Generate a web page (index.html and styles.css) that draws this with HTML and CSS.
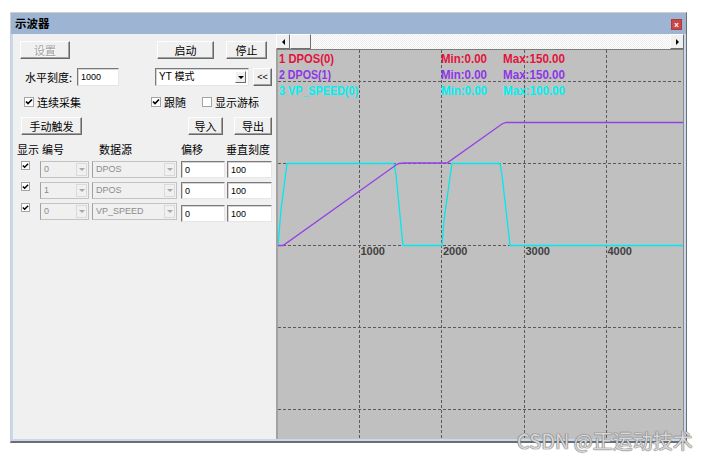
FILE: index.html
```html
<!DOCTYPE html>
<html lang="zh">
<head>
<meta charset="utf-8">
<title>示波器</title>
<link rel="stylesheet" href="styles.css">
</head>
<body>
<div class="window">
  <div class="titlebar">
    <span class="title">示波器</span>
    <span class="close">x</span>
  </div>
  <div class="body">
    <div class="left">
      <div class="row r1">
        <button class="btn b-set" disabled>设置</button>
        <button class="btn b-start">启动</button>
        <button class="btn b-stop">停止</button>
      </div>
      <div class="row r2">
        <span class="lbl-scale">水平刻度:</span>
        <span class="field f-scale">1000</span>
        <span class="field select"><span class="sel-text">YT 模式</span><span class="drop"><i class="tri-down"></i></span></span>
        <button class="btn b-back">&lt;&lt;</button>
      </div>
      <div class="row r3">
        <span class="chk c1"><span class="cb on"><svg width="8" height="8" viewBox="0 0 8 8"><path d="M1 3.5 L3 5.5 L7 1.5" fill="none" stroke="#000" stroke-width="1.7"/></svg></span><span>连续采集</span></span>
        <span class="chk c2"><span class="cb on"><svg width="8" height="8" viewBox="0 0 8 8"><path d="M1 3.5 L3 5.5 L7 1.5" fill="none" stroke="#000" stroke-width="1.7"/></svg></span><span>跟随</span></span>
        <span class="chk c3"><span class="cb"></span><span>显示游标</span></span>
      </div>
      <div class="row r4">
        <button class="btn b-trig">手动触发</button>
        <button class="btn b-imp">导入</button>
        <button class="btn b-exp">导出</button>
      </div>
      <div class="row head">
        <span class="h-show">显示</span>
        <span class="h-num">编号</span>
        <span class="h-src">数据源</span>
        <span class="h-off">偏移</span>
        <span class="h-vs">垂直刻度</span>
      </div>
      <div class="row data">
        <span class="dcb"><span class="cb on"><svg width="8" height="8" viewBox="0 0 8 8"><path d="M1 3.5 L3 5.5 L7 1.5" fill="none" stroke="#000" stroke-width="1.7"/></svg></span></span>
        <span class="combo c-num"><span class="combo-text">0</span><span class="cdrop"><i class="tri-down g"></i></span></span>
        <span class="combo c-src"><span class="combo-text">DPOS</span><span class="cdrop"><i class="tri-down g"></i></span></span>
        <span class="field f-off">0</span>
        <span class="field f-vs">100</span>
      </div>
      <div class="row data">
        <span class="dcb"><span class="cb on"><svg width="8" height="8" viewBox="0 0 8 8"><path d="M1 3.5 L3 5.5 L7 1.5" fill="none" stroke="#000" stroke-width="1.7"/></svg></span></span>
        <span class="combo c-num"><span class="combo-text">1</span><span class="cdrop"><i class="tri-down g"></i></span></span>
        <span class="combo c-src"><span class="combo-text">DPOS</span><span class="cdrop"><i class="tri-down g"></i></span></span>
        <span class="field f-off">0</span>
        <span class="field f-vs">100</span>
      </div>
      <div class="row data last">
        <span class="dcb"><span class="cb on"><svg width="8" height="8" viewBox="0 0 8 8"><path d="M1 3.5 L3 5.5 L7 1.5" fill="none" stroke="#000" stroke-width="1.7"/></svg></span></span>
        <span class="combo c-num"><span class="combo-text">0</span><span class="cdrop"><i class="tri-down g"></i></span></span>
        <span class="combo c-src"><span class="combo-text">VP_SPEED</span><span class="cdrop"><i class="tri-down g"></i></span></span>
        <span class="field f-off low">0</span>
        <span class="field f-vs low">100</span>
      </div>
    </div>
    <div class="right">
      <div class="hscroll">
        <span class="sb-btn"><i class="tri-left"></i></span>
        <span class="sb-thumb"></span>
        <span class="sb-track"></span>
        <span class="sb-btn"><i class="tri-right"></i></span>
      </div>
      <div class="plot">
        <svg class="scope" width="405" height="389" viewBox="0 0 405 389">
          <rect width="405" height="389" fill="#c0c0c0"/>
          <g stroke="#5a5a5a" stroke-width="1" stroke-dasharray="3 2" shape-rendering="crispEdges">
            <line x1="81.5" y1="0" x2="81.5" y2="389"/>
            <line x1="163.5" y1="0" x2="163.5" y2="389"/>
            <line x1="246.5" y1="0" x2="246.5" y2="389"/>
            <line x1="328.5" y1="0" x2="328.5" y2="389"/>
            <line x1="0" y1="31.5" x2="405" y2="31.5"/>
            <line x1="0" y1="113.5" x2="405" y2="113.5"/>
            <line x1="0" y1="195.5" x2="405" y2="195.5"/>
            <line x1="0" y1="277.5" x2="405" y2="277.5"/>
            <line x1="0" y1="359.5" x2="405" y2="359.5"/>
          </g>
          <polyline fill="none" stroke="#00e8f0" stroke-width="1.3" points="0,195.5 3,160 9,113.5 116,113.5 118,125 125,195.5 164,195.5 166,170 174,113.5 222,113.5 224,125 232,195.5 405,195.5"/>
          <polyline fill="none" stroke="#9340e6" stroke-width="1.3" points="0,195.5 5,195.5 118,115 121,113.5 127,113 169,113 224,74 228,72.5 232,72.5 405,72.5"/>
          <g font-family="Liberation Sans, Arial, sans-serif" font-weight="bold" font-size="13">
            <text x="1" y="13" fill="#e0143c" textLength="55" lengthAdjust="spacingAndGlyphs">1 DPOS(0)</text>
            <text x="163" y="13" fill="#e0143c" textLength="46" lengthAdjust="spacingAndGlyphs">Min:0.00</text>
            <text x="225" y="13" fill="#e0143c" textLength="62" lengthAdjust="spacingAndGlyphs">Max:150.00</text>
            <text x="1" y="29" fill="#8e36e4" textLength="52" lengthAdjust="spacingAndGlyphs">2 DPOS(1)</text>
            <text x="163" y="29" fill="#8e36e4" textLength="46" lengthAdjust="spacingAndGlyphs">Min:0.00</text>
            <text x="225" y="29" fill="#8e36e4" textLength="62" lengthAdjust="spacingAndGlyphs">Max:150.00</text>
            <text x="1" y="45" fill="#00f0f0" textLength="79" lengthAdjust="spacingAndGlyphs">3 VP_SPEED(0)</text>
            <text x="163" y="45" fill="#00f0f0" textLength="46" lengthAdjust="spacingAndGlyphs">Min:0.00</text>
            <text x="225" y="45" fill="#00f0f0" textLength="62" lengthAdjust="spacingAndGlyphs">Max:100.00</text>
          </g>
          <g font-family="Liberation Sans, Arial, sans-serif" font-weight="bold" font-size="11" fill="#404040">
            <text x="82.5" y="205">1000</text>
            <text x="165" y="205">2000</text>
            <text x="247.5" y="205">3000</text>
            <text x="329.5" y="205">4000</text>
          </g>
        </svg>
      </div>
    </div>
  </div>
</div>
<div class="watermark">CSDN @正运动技术</div>
</body>
</html>
```

FILE: styles.css
```css
* { box-sizing: border-box; }

body {
  margin: 0;
  background: #fff;
  font-family: "Noto Sans CJK SC", "Liberation Sans", sans-serif;
  font-size: 11px;
  color: #000;
}

.window {
  margin: 12px 0 0 10px;
  width: 677px;
  height: 431px;
  border: 1px solid #cfcfcf;
  border-right-color: #6e6e6e;
  border-bottom: 2px solid #6e6e6e;
  display: flex;
  flex-direction: column;
  background: #f0f0f0;
}

.titlebar {
  height: 21px;
  flex: none;
  background: #9db5d2;
  display: flex;
  align-items: center;
  justify-content: space-between;
  padding: 0 4px 0 4px;
}

.title {
  font-weight: bold;
  font-size: 11.5px;
  line-height: 1;
  margin-top: 1px;
}

.close {
  width: 11px;
  height: 11px;
  background: #c94848;
  color: #fff;
  font: bold 8px/10px "Liberation Sans", sans-serif;
  text-align: center;
  border: 1px solid #b03a3a;
  margin-top: 1px;
}

.body {
  flex: 1;
  min-height: 0;
  display: flex;
  border: 2px solid #c6d9f1;
  border-top: 0;
}

.left {
  width: 263px;
  flex: none;
  display: flex;
  flex-direction: column;
  background: #f0f0f0;
}

.right {
  flex: 1;
  display: flex;
  flex-direction: column;
  min-width: 0;
}

.row {
  display: flex;
  align-items: center;
  flex: none;
}

/* buttons */
.btn {
  height: 18px;
  padding: 0;
  margin: 0;
  font-family: "Noto Sans CJK SC", sans-serif;
  font-size: 11px;
  line-height: 1;
  color: #000;
  background: #f0f0f0;
  border: 1px solid;
  border-color: #fdfdfd #696969 #696969 #fdfdfd;
  box-shadow: inset -1px -1px #a0a0a0;
  outline: none;
}

.btn:disabled {
  color: #a3a3a3;
  text-shadow: 1px 1px #fff;
}

.r1 { margin-top: 7px; height: 18px; padding-left: 7px; }
.b-set { width: 50px; }
.b-start { width: 57px; margin-left: 87px; }
.b-stop { width: 41px; margin-left: 12px; }

.r2 { margin-top: 9px; height: 18px; padding-left: 12px; }
.lbl-scale { width: 52px; }

.field {
  height: 18px;
  background: #fff;
  border: 1px solid;
  border-color: #7a7a7a #e6e6e6 #e6e6e6 #7a7a7a;
  box-shadow: inset 1px 1px #d4d4d4;
  font: 9px/16px "Liberation Sans", sans-serif;
  padding-left: 3px;
  display: flex;
  align-items: center;
}
.f-scale { width: 42px; }

.select {
  width: 94px;
  margin-left: 36px;
  justify-content: space-between;
  padding-right: 2px;
}
.sel-text {
  font-family: "Liberation Sans", "Noto Sans CJK SC", sans-serif;
  font-size: 10px;
}
.drop {
  width: 11px;
  height: 12px;
  background: #f0f0f0;
  border: 1px solid;
  border-color: #fdfdfd #6a6a6a #6a6a6a #fdfdfd;
  display: flex;
  align-items: center;
  justify-content: center;
}
.tri-down {
  width: 0;
  height: 0;
  border-left: 3px solid transparent;
  border-right: 3px solid transparent;
  border-top: 3px solid #000;
}
.tri-down.g { border-top-color: #a8a8a8; }

.b-back {
  width: 19px;
  margin-left: 4px;
  font-family: "Liberation Sans", sans-serif;
  font-size: 9px;
}

.r3 { margin-top: 9px; height: 14px; padding-left: 11px; }
.chk { display: flex; align-items: center; }
.chk .cb { margin-right: 3px; }
.c1 { width: 127px; }
.c2 { width: 51px; }

.cb {
  width: 10px;
  height: 10px;
  background: #fff;
  border: 1px solid #a4a4a4;
  display: flex;
  align-items: center;
  justify-content: center;
  flex: none;
}

.r4 { margin-top: 8px; height: 18px; padding-left: 8px; }
.b-trig { width: 61px; }
.b-imp { width: 35px; margin-left: 106px; }
.b-exp { width: 38px; margin-left: 11px; }

.head { margin-top: 7px; height: 14px; padding-left: 4px; }
.h-show { width: 25px; }
.h-num { width: 57px; }
.h-src { width: 82px; }
.h-off { width: 45px; }

.data { margin-top: 4px; height: 17px; padding-left: 8px; align-items: flex-start; }
.head + .data { margin-top: 5px; }
.dcb { width: 19px; }
.dcb .cb { width: 9px; height: 9px; }

.combo {
  height: 17px;
  background: #f0f0f0;
  border: 1px solid #c2c2c2;
  border-left-color: #a0a0a0;
  display: flex;
  align-items: center;
  justify-content: space-between;
  padding: 0 1px 0 3px;
}
.combo-text {
  font: 9px/15px "Liberation Sans", sans-serif;
  color: #8c8c8c;
}
.cdrop {
  width: 11px;
  height: 13px;
  border: 1px solid #dadada;
  background: #f0f0f0;
  display: flex;
  align-items: center;
  justify-content: center;
}
.c-num { width: 49px; }
.c-src { width: 85px; margin-left: 3px; }

.data .field { height: 17px; }
.f-off { width: 44px; margin-left: 4px; }
.f-vs { width: 45px; margin-left: 2px; }
.field.low { margin-top: 2px; }

/* horizontal scrollbar */
.hscroll {
  height: 15px;
  flex: none;
  display: flex;
  background: repeating-conic-gradient(#ffffff 0 25%, #ececec 0 50%) 0 0 / 2px 2px;
}
.sb-btn, .sb-thumb {
  height: 15px;
  background: #f0f0f0;
  border: 1px solid;
  border-color: #fdfdfd #6f6f6f #6f6f6f #fdfdfd;
  display: flex;
  align-items: center;
  justify-content: center;
  flex: none;
}
.sb-btn { width: 14px; }
.sb-thumb { width: 21px; }
.sb-track { flex: 1; }
.tri-left {
  width: 0;
  height: 0;
  border-top: 3px solid transparent;
  border-bottom: 3px solid transparent;
  border-right: 3px solid #000;
}
.tri-right {
  width: 0;
  height: 0;
  border-top: 3px solid transparent;
  border-bottom: 3px solid transparent;
  border-left: 3px solid #000;
}

.plot {
  flex: 1;
  border-top: 1px solid #7c7c7c;
  border-left: 2px solid #a2a2a2;
  border-right: 1px solid #8c8c8c;
  background: #c0c0c0;
  overflow: hidden;
}
.scope { display: block; }

.watermark {
  position: absolute;
  left: 517px;
  top: 429px;
  font-family: "Noto Sans CJK SC", sans-serif;
  font-size: 20px;
  line-height: 24px;
  color: rgba(245, 245, 245, 0.8);
  text-shadow: 0 0 1px #707070, 0 0 1px #707070, 0 0 1px #707070;
  white-space: nowrap;
}
```
